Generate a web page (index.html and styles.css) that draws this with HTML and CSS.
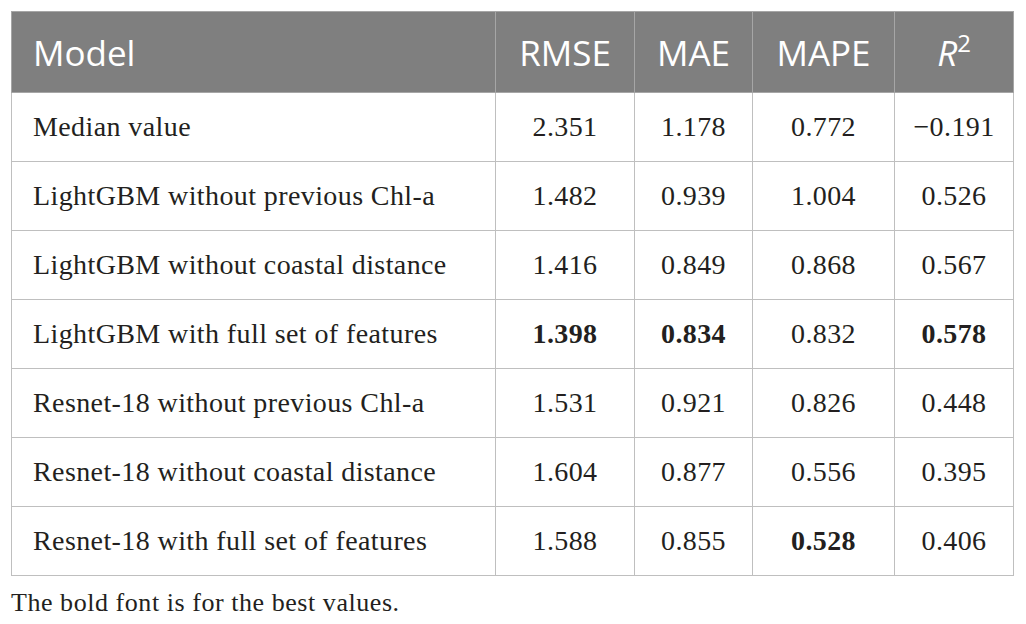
FILE: index.html
```html
<!DOCTYPE html>
<html lang="en">

<head>
    <meta charset="UTF-8">
    <title>Model comparison</title>
    <link rel="stylesheet" href="styles.css">
</head>

<body>

    <div id="container">
        <!-- results table -->
        <table class="results">
            <colgroup>
                <col class="colModel">
                <col class="colRmse">
                <col class="colMae">
                <col class="colMape">
                <col class="colR2">
            </colgroup>
            <thead>
                <tr>
                    <th class="left">Model</th>
                    <th>RMSE</th>
                    <th>MAE</th>
                    <th>MAPE</th>
                    <th><i>R</i><sup>2</sup></th>
                </tr>
            </thead>
            <tbody>
                <tr>
                    <td class="left">Median value</td>
                    <td>2.351</td>
                    <td>1.178</td>
                    <td>0.772</td>
                    <td>&minus;0.191</td>
                </tr>
                <tr>
                    <td class="left">LightGBM without previous Chl-a</td>
                    <td>1.482</td>
                    <td>0.939</td>
                    <td>1.004</td>
                    <td>0.526</td>
                </tr>
                <tr>
                    <td class="left">LightGBM without coastal distance</td>
                    <td>1.416</td>
                    <td>0.849</td>
                    <td>0.868</td>
                    <td>0.567</td>
                </tr>
                <tr>
                    <td class="left">LightGBM with full set of features</td>
                    <td><b>1.398</b></td>
                    <td><b>0.834</b></td>
                    <td>0.832</td>
                    <td><b>0.578</b></td>
                </tr>
                <tr>
                    <td class="left">Resnet-18 without previous Chl-a</td>
                    <td>1.531</td>
                    <td>0.921</td>
                    <td>0.826</td>
                    <td>0.448</td>
                </tr>
                <tr>
                    <td class="left">Resnet-18 without coastal distance</td>
                    <td>1.604</td>
                    <td>0.877</td>
                    <td>0.556</td>
                    <td>0.395</td>
                </tr>
                <tr>
                    <td class="left">Resnet-18 with full set of features</td>
                    <td>1.588</td>
                    <td>0.855</td>
                    <td><b>0.528</b></td>
                    <td>0.406</td>
                </tr>
            </tbody>
        </table>
        <!-- note under the table -->
        <p class="note">The bold font is for the best values.</p>
    </div>

</body>

</html>
```

FILE: styles.css
```css
body {
    margin: 0;
    background-color: #ffffff;
    color: #231f20;
    font-family: "Liberation Serif", "Times New Roman", serif;
}

#container {
    padding: 11px 0 0 11px;
}

.results {
    border-collapse: collapse;
    width: 1002px;
    table-layout: fixed;
}

.colModel { width: 484px; }
.colRmse { width: 139px; }
.colMae { width: 118px; }
.colMape { width: 142px; }
.colR2 { width: 119px; }

/* grey header row */
th {
    height: 80px;
    background-color: #7f7f7f;
    color: #ffffff;
    font-family: "Open Sans", "Lato", sans-serif;
    font-weight: normal;
    font-size: 35px;
    text-align: center;
    border: 1px solid #a6a6a6;
    padding: 0;
}

th sup {
    font-size: 24px;
    vertical-align: 14px;
    line-height: 0;
}

td {
    height: 68px;
    font-size: 28px;
    letter-spacing: 0.4px;
    text-align: center;
    border: 1px solid #bfbfbf;
    padding: 0;
}

th.left,
td.left {
    text-align: left;
    padding-left: 21px;
}

.note {
    margin: 12px 0 0 0;
    font-size: 26px;
    letter-spacing: 0.55px;
}
```
